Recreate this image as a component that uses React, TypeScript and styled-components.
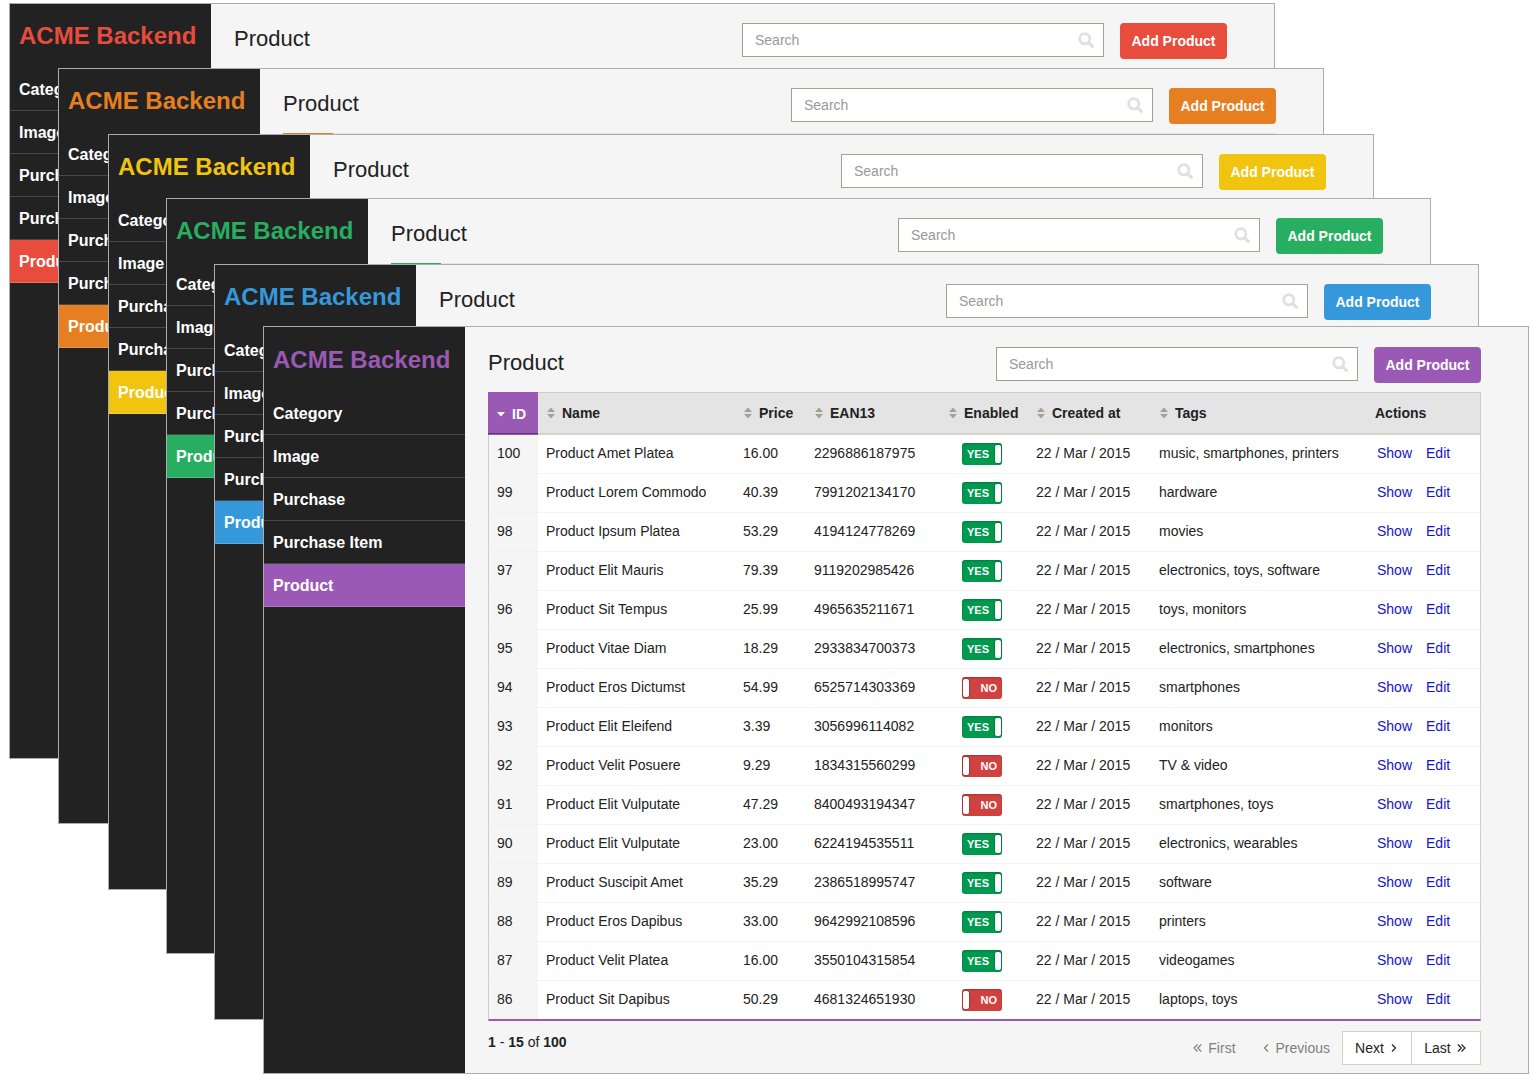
import React, { useState } from "react";
import styled, { createGlobalStyle } from "styled-components";

const GlobalStyle = createGlobalStyle`
  *, *::before, *::after { box-sizing: border-box; }
  body {
    margin: 0;
    background: #fff;
    color: #222;
    font-family: "Liberation Sans", Arial, Helvetica, sans-serif;
    font-size: 14px;
    line-height: 20px;
  }
`;

const Stage = styled.div`
  display: grid;
  align-items: start;
  padding-bottom: 5px;
`;

const WindowFrame = styled.section<{ $top: number; $left: number; $right: number; $front: boolean }>`
  grid-area: 1 / 1;
  display: flex;
  min-height: ${(p) => (p.$front ? 748 : 756)}px;
  margin: ${(p) => `${p.$top}px ${p.$right}px 0 ${p.$left}px`};
  background: #f5f5f5;
  border: 1px solid #acacac;
`;

const Sidebar = styled.aside`
  flex: 0 0 201px;
  background: #222;
`;

const Brand = styled.div<{ $accent: string; $front: boolean }>`
  height: ${(p) => (p.$front ? 65 : 64)}px;
  padding: 0 9px;
  font-size: 24px;
  font-weight: bold;
  line-height: ${(p) => (p.$front ? 66 : 64)}px;
  white-space: nowrap;
  color: ${(p) => p.$accent};
`;

const Menu = styled.ul`
  margin: 0;
  padding: 0;
  list-style: none;
`;

const MenuLink = styled.a<{ $accent?: string }>`
  display: block;
  height: 43px;
  padding: 0 9px;
  border-bottom: 1px solid ${(p) => (p.$accent ? "rgba(255, 255, 255, 0.2)" : "#484848")};
  background: ${(p) => p.$accent ?? "#222"};
  color: #fff;
  font-size: 16px;
  font-weight: bold;
  line-height: 44px;
  text-decoration: none;
  white-space: nowrap;
`;

const Main = styled.main<{ $front: boolean }>`
  flex: 1;
  min-width: 0;
  padding: ${(p) => (p.$front ? 20 : 19)}px 47px 8px 23px;
`;

const Header = styled.header`
  display: flex;
  align-items: flex-start;
  gap: 16px;
  height: 36px;
  margin-bottom: 9px;
`;

const Title = styled.h1`
  flex: 1;
  margin: 0;
  font-size: 22px;
  font-weight: normal;
  line-height: 32px;
`;

const SearchBox = styled.label`
  display: flex;
  align-items: center;
  flex: 0 1 362px;
  height: 34px;
  padding: 0 9px 0 12px;
  background: #fff;
  border: 1px solid #a69f98;
`;

const SearchInput = styled.input`
  flex: 1;
  min-width: 0;
  padding: 0;
  border: 0;
  outline: 0;
  background: none;
  color: #222;
  font: inherit;
  &::placeholder { color: #999; opacity: 1; }
`;

const AddButton = styled.button<{ $accent: string }>`
  flex: 0 0 107px;
  height: 36px;
  padding: 0;
  border: 0;
  border-radius: 4px;
  background: ${(p) => p.$accent};
  color: #fff;
  font: bold 14px/36px "Liberation Sans", Arial, sans-serif;
  white-space: nowrap;
`;

const ListEdge = styled.div<{ $accent: string }>`
  height: 43px;
  border-left: 50px solid ${(p) => p.$accent};
  background: #e4e4e4;
`;

const Table = styled.table`
  width: 100%;
  table-layout: fixed;
  border-collapse: separate;
  border-spacing: 0;
`;

const HeadCell = styled.th<{ $accent?: string }>`
  height: 43px;
  padding: 0 8px;
  border-top: 1px solid ${(p) => p.$accent ?? "#ccc"};
  border-bottom: ${(p) => (p.$accent ? `1px solid ${p.$accent}` : "2px solid #d8d3c9")};
  box-shadow: ${(p) => (p.$accent ? "inset 0 -1px 0 #5c3273" : "none")};
  background: ${(p) => p.$accent ?? "#e4e4e4"};
  color: ${(p) => (p.$accent ? "#fff" : "#222")};
  text-align: left;
  white-space: nowrap;
  &:last-child { border-right: 1px solid #ccc; }
`;

const SortLink = styled.a`
  display: flex;
  align-items: center;
  gap: 7px;
  padding-left: 1px;
  color: inherit;
  text-decoration: none;
`;

const Cell = styled.td`
  height: 39px;
  padding: 0 8px 2px;
  border-bottom: 1px solid #f3f3f3;
  background: #fff;
  white-space: nowrap;
  &:first-child { background: #f5f5f5; border-left: 1px solid #ccc; }
  &:last-child { border-right: 1px solid #ccc; }
`;

const Row = styled.tr<{ $accent: string }>`
  &:last-child > td {
    height: 40px;
    border-bottom: 2px solid ${(p) => p.$accent};
  }
`;

const ToggleCell = styled(Cell)`
  padding: 0 8px 0 22px;
`;

const Toggle = styled.label<{ $on: boolean }>`
  display: flex;
  flex-direction: ${(p) => (p.$on ? "row-reverse" : "row")};
  align-items: center;
  justify-content: space-between;
  width: 40px;
  height: 22px;
  padding: ${(p) => (p.$on ? "0 1px 0 5px" : "0 5px 0 1px")};
  border-radius: 3px;
  background: ${(p) => (p.$on ? "#009a4e" : "#d04240")};
  box-shadow: inset 0 1px 2px rgba(0, 0, 0, 0.2);
  color: #fff;
  font-size: 11px;
  font-weight: bold;
  line-height: 22px;
`;

const ToggleKnob = styled.input`
  appearance: none;
  width: 6px;
  height: 18px;
  margin: 0;
  border-radius: 2px;
  background: #fff;
  box-shadow: 0 0 2px rgba(0, 0, 0, 0.5);
`;

const Actions = styled.div`
  display: flex;
  gap: 14px;
  padding-left: 2px;
`;

const ActionLink = styled.a`
  color: #1414c8;
  text-decoration: none;
`;

const Footer = styled.footer`
  display: flex;
  align-items: flex-start;
  justify-content: space-between;
  padding-top: 10px;
`;

const Count = styled.div`
  line-height: 22px;
`;

const Pager = styled.nav`
  display: flex;
`;

const PageButton = styled.button`
  display: flex;
  align-items: center;
  justify-content: center;
  gap: 6px;
  width: 70px;
  height: 34px;
  padding: 0 2px 0 0;
  border: 1px solid #d5d0c5;
  background: #fff;
  color: #222;
  font: inherit;
  & + & { margin-left: -1px; }
  &:disabled {
    width: auto;
    margin-right: 12px;
    padding: 0 0 0 14px;
    border-color: transparent;
    background: none;
    color: #808080;
  }
`;

const SearchIcon = () => (
  <svg width="16" height="16" viewBox="0 0 16 16" fill="none" stroke="#e0e0e0" aria-hidden="true">
    <circle cx="6.8" cy="6.8" r="5.1" strokeWidth="2.8" />
    <path d="M10.8 10.8 L14.4 14.4" strokeWidth="3.2" strokeLinecap="round" />
  </svg>
);

const SortIcon = ({ active }: { active?: boolean }) => (
  <svg width="8" height="12" viewBox="0 0 8 12" fill={active ? "#fff" : "#a69f98"} aria-hidden="true">
    {active ? <path d="M0 4H8L4 8.4Z" /> : <path d="M0 5L4 0.6L8 5ZM0 7H8L4 11.4Z" />}
  </svg>
);

const Chevron = ({ double, left }: { double?: boolean; left?: boolean }) => (
  <svg
    width={double ? 9 : 7}
    height="10"
    viewBox={double ? "0 0 9 10" : "0 0 7 10"}
    fill="none"
    stroke="currentColor"
    strokeWidth="1.2"
    aria-hidden="true"
  >
    {left ? (
      <path d={double ? "M4.5 1.5L1 5L4.5 8.5M8.2 1.5L4.7 5L8.2 8.5" : "M5 1.5L1.5 5L5 8.5"} />
    ) : (
      <path d={double ? "M0.8 1.5L4.3 5L0.8 8.5M4.5 1.5L8 5L4.5 8.5" : "M2 1.5L5.5 5L2 8.5"} />
    )}
  </svg>
);

const MENU = ["Category", "Image", "Purchase", "Purchase Item", "Product"];

const THEMES = [
  { accent: "#e74c3c", top: 3, left: 9, right: 264 },
  { accent: "#e67e22", top: 68, left: 58, right: 215 },
  { accent: "#f1c40f", top: 134, left: 108, right: 165 },
  { accent: "#27ae60", top: 198, left: 166, right: 108 },
  { accent: "#3498db", top: 264, left: 214, right: 60 },
  { accent: "#9b59b6", top: 326, left: 263, right: 10 },
];

const COLUMNS = [
  { label: "ID", width: 50 },
  { label: "Name", width: 197 },
  { label: "Price", width: 71 },
  { label: "EAN13", width: 134 },
  { label: "Enabled", width: 88 },
  { label: "Created at", width: 123 },
  { label: "Tags", width: undefined },
];

type Product = [number, string, string, string, boolean, string];

const PRODUCTS: Product[] = [
  [100, "Product Amet Platea", "16.00", "2296886187975", true, "music, smartphones, printers"],
  [99, "Product Lorem Commodo", "40.39", "7991202134170", true, "hardware"],
  [98, "Product Ipsum Platea", "53.29", "4194124778269", true, "movies"],
  [97, "Product Elit Mauris", "79.39", "9119202985426", true, "electronics, toys, software"],
  [96, "Product Sit Tempus", "25.99", "4965635211671", true, "toys, monitors"],
  [95, "Product Vitae Diam", "18.29", "2933834700373", true, "electronics, smartphones"],
  [94, "Product Eros Dictumst", "54.99", "6525714303369", false, "smartphones"],
  [93, "Product Elit Eleifend", "3.39", "3056996114082", true, "monitors"],
  [92, "Product Velit Posuere", "9.29", "1834315560299", false, "TV & video"],
  [91, "Product Elit Vulputate", "47.29", "8400493194347", false, "smartphones, toys"],
  [90, "Product Elit Vulputate", "23.00", "6224194535511", true, "electronics, wearables"],
  [89, "Product Suscipit Amet", "35.29", "2386518995747", true, "software"],
  [88, "Product Eros Dapibus", "33.00", "9642992108596", true, "printers"],
  [87, "Product Velit Platea", "16.00", "3550104315854", true, "videogames"],
  [86, "Product Sit Dapibus", "50.29", "4681324651930", false, "laptops, toys"],
];

function EnabledToggle({ initial, name }: { initial: boolean; name: string }) {
  const [on, setOn] = useState(initial);
  return (
    <Toggle $on={on}>
      <ToggleKnob
        type="checkbox"
        checked={on}
        onChange={(e) => setOn(e.target.checked)}
        aria-label={`${name} enabled`}
      />
      <span>{on ? "YES" : "NO"}</span>
    </Toggle>
  );
}

function ProductList({ accent }: { accent: string }) {
  return (
    <>
      <Table>
        <colgroup>
          {COLUMNS.map((c) => (
            <col key={c.label} width={c.width} />
          ))}
          <col width={114} />
        </colgroup>
        <thead>
          <tr>
            {COLUMNS.map((c, i) => (
              <HeadCell key={c.label} scope="col" $accent={i === 0 ? accent : undefined}>
                <SortLink href="#sort">
                  <SortIcon active={i === 0} />
                  {c.label}
                </SortLink>
              </HeadCell>
            ))}
            <HeadCell scope="col">Actions</HeadCell>
          </tr>
        </thead>
        <tbody>
          {PRODUCTS.map(([id, name, price, ean, enabled, tags]) => (
            <Row key={id} $accent={accent}>
              <Cell>{id}</Cell>
              <Cell>{name}</Cell>
              <Cell>{price}</Cell>
              <Cell>{ean}</Cell>
              <ToggleCell>
                <EnabledToggle initial={enabled} name={name} />
              </ToggleCell>
              <Cell>22 / Mar / 2015</Cell>
              <Cell>{tags}</Cell>
              <Cell>
                <Actions>
                  <ActionLink href="#show">Show</ActionLink>
                  <ActionLink href="#edit">Edit</ActionLink>
                </Actions>
              </Cell>
            </Row>
          ))}
        </tbody>
      </Table>
      <Footer>
        <Count>
          <b>1</b> - <b>15</b> of <b>100</b>
        </Count>
        <Pager aria-label="Pagination">
          <PageButton disabled>
            <Chevron double left />
            First
          </PageButton>
          <PageButton disabled>
            <Chevron left />
            Previous
          </PageButton>
          <PageButton>
            Next
            <Chevron />
          </PageButton>
          <PageButton>
            Last
            <Chevron double />
          </PageButton>
        </Pager>
      </Footer>
    </>
  );
}

export default function App() {
  return (
    <>
      <GlobalStyle />
      <Stage>
        {THEMES.map(({ accent, top, left, right }, i) => {
          const front = i === THEMES.length - 1;
          return (
            <WindowFrame key={accent} $top={top} $left={left} $right={right} $front={front}>
              <Sidebar>
                <Brand $accent={accent} $front={front}>
                  ACME Backend
                </Brand>
                <Menu>
                  {MENU.map((item) => (
                    <li key={item}>
                      <MenuLink href="#menu" $accent={item === "Product" ? accent : undefined}>
                        {item}
                      </MenuLink>
                    </li>
                  ))}
                </Menu>
              </Sidebar>
              <Main $front={front}>
                <Header>
                  <Title>Product</Title>
                  <SearchBox>
                    <SearchInput type="text" placeholder="Search" aria-label="Search" />
                    <SearchIcon />
                  </SearchBox>
                  <AddButton $accent={accent}>Add Product</AddButton>
                </Header>
                {front ? <ProductList accent={accent} /> : <ListEdge $accent={accent} />}
              </Main>
            </WindowFrame>
          );
        })}
      </Stage>
    </>
  );
}
